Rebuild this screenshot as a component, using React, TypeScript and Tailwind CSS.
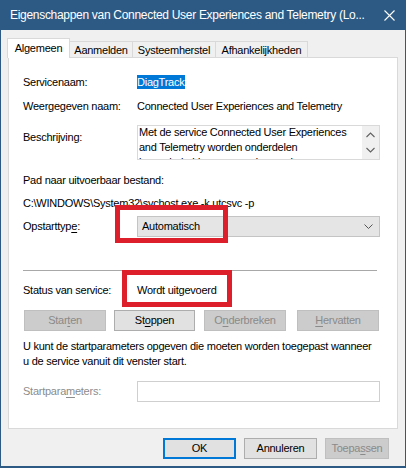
import React from "react";

const font = { fontFamily: '"Liberation Sans", Arial, sans-serif' };

function U({ children }: { children: React.ReactNode }) {
  return <span className="underline underline-offset-[2px] decoration-[1px]">{children}</span>;
}

function Btn({
  children,
  disabled,
  w = "w-[82px]",
}: {
  children: React.ReactNode;
  disabled?: boolean;
  w?: string;
}) {
  return (
    <div
      className={`${w} h-[21px] flex items-center justify-center border ${
        disabled
          ? "bg-[#cccccc] border-[#bfbfbf] text-[#8a8a8a]"
          : "bg-[#e1e1e1] border-[#adadad] text-black"
      }`}
    >
      {children}
    </div>
  );
}

export default function App() {
  return (
    <div
      className="relative w-[406px] h-[468px] bg-[#2c5a85] text-[11px] tracking-[-0.25px] text-black overflow-hidden"
      style={font}
    >
      {/* Title bar */}
      <div className="h-[30px] flex items-center justify-between pl-[10px] pr-[11px]">
        <span className="text-white text-[12px] tracking-[-0.3px] whitespace-nowrap">
          Eigenschappen van Connected User Experiences and Telemetry (Lo...
        </span>
        <svg width="11" height="11" viewBox="0 0 11 11" className="shrink-0">
          <path d="M0.5 0.5 L10.5 10.5 M10.5 0.5 L0.5 10.5" stroke="white" strokeWidth="1.1" />
        </svg>
      </div>

      {/* Body */}
      <div className="mx-[1px] h-[436px] bg-[#f0f0f0] pt-[8px] pl-[6px]">
        {/* Tabs */}
        <div className="flex items-end h-[20px] relative z-10">
          <div className="w-[63px] h-[20px] bg-white border border-b-0 border-[#d9d9d9] flex items-center justify-center pb-[1px]">
            Algemeen
          </div>
          <div className="w-[63px] h-[17px] border border-b-0 border-l-0 border-[#d9d9d9] flex items-center justify-center">
            Aanmelden
          </div>
          <div className="w-[83px] h-[17px] border border-b-0 border-l-0 border-[#d9d9d9] flex items-center justify-center">
            Systeemherstel
          </div>
          <div className="w-[92px] h-[17px] border border-b-0 border-l-0 border-[#d9d9d9] flex items-center justify-center">
            Afhankelijkheden
          </div>
        </div>

        {/* Panel */}
        <div className="ml-[1px] -mt-px w-[390px] h-[372px] bg-white border border-[#d9d9d9] pl-[14px] flex flex-col">
          <div className="mt-[16px] h-[16px] flex items-center">
            <div className="w-[114px]">Servicenaam:</div>
            <div className="bg-[#0078d7] text-white h-[14px] leading-[14px] pr-[1px]">DiagTrack</div>
          </div>
          <div className="mt-[8px] h-[16px] flex items-center">
            <div className="w-[114px]">Weergegeven naam:</div>
            <div>Connected User Experiences and Telemetry</div>
          </div>
          <div className="mt-[11px] flex">
            <div className="w-[114px] pt-[4px]">Beschrijving:</div>
            <div className="w-[243px] h-[35px] border border-[#d9d9d9] flex overflow-hidden">
              <div className="flex-1 pl-[1px] leading-[15px] -mt-[1px]">
                Met de service Connected User Experiences
                <br />
                and Telemetry worden onderdelen
                <br />
                ingeschakeld, waarmee de ervaringen van
              </div>
              <div className="w-[17px] bg-[#f0f0f0] flex flex-col items-center justify-between py-[6px]">
                <svg width="9" height="6" viewBox="0 0 9 6">
                  <path d="M0.5 5 L4.5 1 L8.5 5" fill="none" stroke="#606060" strokeWidth="1.1" />
                </svg>
                <svg width="9" height="6" viewBox="0 0 9 6">
                  <path d="M0.5 1 L4.5 5 L8.5 1" fill="none" stroke="#606060" strokeWidth="1.1" />
                </svg>
              </div>
            </div>
          </div>
          <div className="mt-[12px] h-[16px] flex items-center">Pad naar uitvoerbaar bestand:</div>
          <div className="mt-[7px] h-[16px] flex items-center">
            C:\WINDOWS\System32\svchost.exe -k utcsvc -p
          </div>
          <div className="mt-[5px] flex items-center">
            <div className="w-[114px]">
              Opstarttyp<U>e</U>:
            </div>
            <div className="w-[243px] h-[21px] bg-[#e5e5e5] border border-[#c4c4c4] flex items-center justify-between pl-[4px] pr-[6px]">
              <span>Automatisch</span>
              <svg width="9" height="5" viewBox="0 0 9 5">
                <path d="M0.5 0.5 L4.5 4.5 L8.5 0.5" fill="none" stroke="#555" strokeWidth="1" />
              </svg>
            </div>
          </div>
          <div className="mt-[33px] w-[354px] h-px bg-[#a8a8a8]" />
          <div className="mt-[11px] h-[16px] flex items-center">
            <div className="w-[114px]">Status van service:</div>
            <div>Wordt uitgevoerd</div>
          </div>
          <div className="mt-[12px] ml-[1px] flex">
            <Btn disabled>
              Star<U>t</U>en
            </Btn>
            <div className="ml-[8px]">
              <Btn w="w-[81px]">
                St<U>o</U>ppen
              </Btn>
            </div>
            <div className="ml-[9px]">
              <Btn disabled>
                O<U>n</U>derbreken
              </Btn>
            </div>
            <div className="ml-[11px]">
              <Btn disabled>
                <U>H</U>ervatten
              </Btn>
            </div>
          </div>
          <div className="mt-[8px] leading-[15px]">
            U kunt de startparameters opgeven die moeten worden toegepast wanneer
            <br />u de service vanuit dit venster start.
          </div>
          <div className="mt-[12px] flex items-center">
            <div className="w-[114px] text-[#8c8c8c]">
              Startpara<U>m</U>eters:
            </div>
            <div className="w-[243px] h-[21px] border border-[#cfcfcf] bg-white" />
          </div>
        </div>

        {/* Bottom buttons */}
        <div className="mt-[9px] flex pl-[156px]">
          <div className="w-[73px] h-[21px] bg-[#e1e1e1] border-2 border-[#0078d7] flex items-center justify-center">
            OK
          </div>
          <div className="ml-[8px]">
            <Btn w="w-[73px]">Annuleren</Btn>
          </div>
          <div className="ml-[8px]">
            <Btn disabled w="w-[64px]">
              Toepa<U>s</U>sen
            </Btn>
          </div>
        </div>
      </div>

      {/* Red annotation boxes */}
      <div className="absolute left-[115px] top-[205px] w-[113px] h-[38px] border-[5px] border-[#dd1e2b]" />
      <div className="absolute left-[122px] top-[270px] w-[110px] h-[37px] border-[5px] border-[#dd1e2b]" />
    </div>
  );
}
